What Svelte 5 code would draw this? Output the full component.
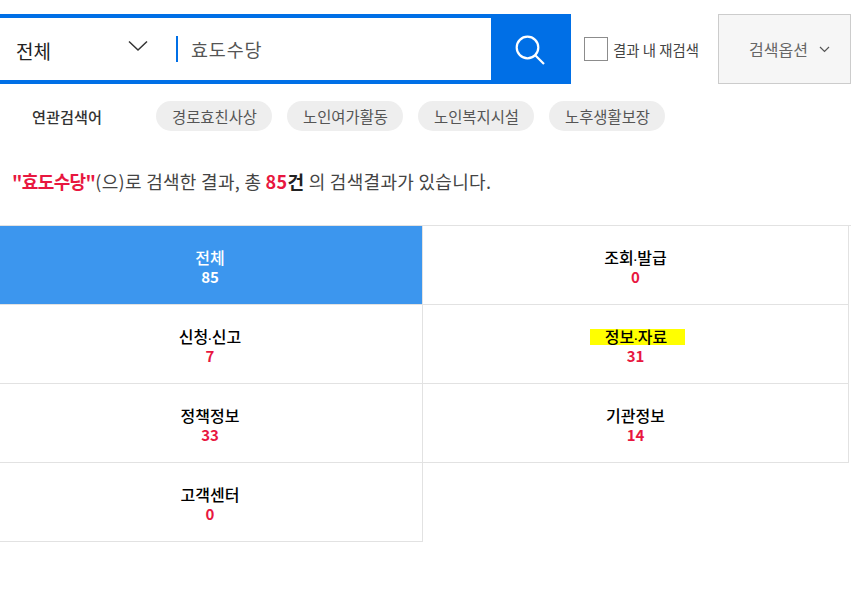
<script>
  const chips = ['경로효친사상', '노인여가활동', '노인복지시설', '노후생활보장'];
  const tabs = [
    { label: ['전체'], count: 85, active: true },
    { label: ['조회', '발급'], count: 0 },
    { label: ['신청', '신고'], count: 7 },
    { label: ['정보', '자료'], count: 31, mark: true },
    { label: ['정책정보'], count: 33 },
    { label: ['기관정보'], count: 14 },
    { label: ['고객센터'], count: 0 }
  ];
</script>

<div class="page">
  <div class="top">
    <div class="search">
      <div class="scope">
        <span>전체</span>
        <svg class="chev" width="20" height="12" viewBox="0 0 20 12"><path d="M1 1.5 L10 10 L19 1.5" fill="none" stroke="#333" stroke-width="1.5"/></svg>
      </div>
      <div class="query"><span>효도수당</span></div>
      <div class="btn">
        <svg width="30" height="30" viewBox="0 0 30 30"><circle cx="12.5" cy="12.5" r="10.8" fill="none" stroke="#fff" stroke-width="2.2"/><path d="M20.2 20.2 L29 29" stroke="#fff" stroke-width="2.2" fill="none"/></svg>
      </div>
    </div>
    <label class="re"><span class="box"></span><span>결과 내 재검색</span></label>
    <div class="opt">
      <span>검색옵션</span>
      <svg width="11" height="7" viewBox="0 0 11 7"><path d="M1 1 L5.5 5.5 L10 1" fill="none" stroke="#555" stroke-width="1.2"/></svg>
    </div>
  </div>

  <div class="related">
    <strong>연관검색어</strong>
    <div class="chips">
      {#each chips as c}<span class="chip">{c}</span>{/each}
    </div>
  </div>

  <p class="summary"><b class="red key">"효도수당"</b>(으)로 검색한 결과, 총 <b class="red">85</b><b>건</b> 의 검색결과가 있습니다.</p>

  <ul class="grid">
    {#each tabs as t}
      <li class:active={t.active}>
        <span class="label" class:mark={t.mark}>{t.label[0]}{#if t.label[1]}<span class="dot">·</span>{t.label[1]}{/if}</span>
        <span class="count">{t.count}</span>
      </li>
    {/each}
  </ul>
</div>

<style>
  :global(body) { margin: 0; background: #fff; }
  .page { font-family: "Noto Sans CJK KR", "Noto Sans", sans-serif; color: #333; width: 860px; height: 595px; overflow: hidden; padding-top: 14px; box-sizing: border-box; }
  .top { display: flex; align-items: flex-start; }
  .search { display: flex; width: 571px; height: 70px; box-sizing: border-box; border: 4px solid #006fe6; border-left: 0; border-right: 0; }
  .scope { width: 176px; display: flex; align-items: center; justify-content: space-between; padding: 0 28px 0 16px; box-sizing: border-box; font-size: 19px; color: #222; }
  .scope span { position: relative; top: 1px; }
  .chev { position: relative; top: -3px; }
  .query { flex: 1; display: flex; align-items: center; }
  .query span { border-left: 2px solid #006fe6; height: 26px; line-height: 26px; padding-left: 13px; font-size: 18.5px; color: #555; letter-spacing: 0.8px; display: block; }
  .btn { width: 80px; margin: -4px 0; padding: 2px 2px 0 0; box-sizing: border-box; background: #006fe6; display: flex; align-items: center; justify-content: center; }
  .re { display: flex; align-items: center; margin: 23px 0 0 13px; font-size: 14.4px; color: #444; width: 134px; height: 24px; white-space: nowrap; }
  .box { width: 22px; height: 22px; border: 1px solid #8c8c8c; margin-right: 5px; flex: none; }
  .opt { width: 133px; height: 70px; padding-left: 10px; box-sizing: border-box; border: 1px solid #ccc; background: #f6f6f6; display: flex; align-items: center; justify-content: center; gap: 11px; font-size: 16px; color: #666; }
  .related { display: flex; align-items: center; height: 30px; margin-top: 17px; }
  .related strong { width: 156px; padding-left: 32px; box-sizing: border-box; font-size: 15.2px; font-weight: 500; color: #333; }
  .chips { display: flex; gap: 15px; }
  .chip { width: 116px; height: 30px; line-height: 30px; border-radius: 15px; background: #eee; text-align: center; text-indent: 1px; font-size: 15.4px; color: #555; }
  .summary { margin: 33px 0 0; padding-left: 12px; height: 34px; line-height: 34px; font-size: 18px; letter-spacing: 0.3px; color: #444; white-space: nowrap; }
  .summary b { font-weight: 700; color: #222; }
  .summary b.red { color: #e8173f; }
  .summary b.key { letter-spacing: -0.6px; }
  .grid { list-style: none; margin: 27px 0 0 -2px; padding: 0; width: 853px; border-top: 1px solid #e2e2e2; display: grid; grid-template-columns: 425px 426px; grid-auto-rows: 79px; }
  .grid li { box-sizing: border-box; padding-top: 4px; border-right: 1px solid #e2e2e2; border-bottom: 1px solid #e2e2e2; display: flex; flex-direction: column; align-items: center; justify-content: center; font-size: 16px; font-weight: 500; line-height: 20px; color: #000; }
  .grid li.active { background: #3c96ee; color: #fff; }
  .label { height: 20px; }
  .dot { font-family: "Liberation Sans", sans-serif; font-size: 11px; font-weight: 700; line-height: 0; }
  .count { color: #e8173f; font-weight: 700; font-size: 15px; }
  .active .count { color: #fff; }
  .mark { width: 95px; margin-left: 4px; text-align: center; text-indent: -3px; background: linear-gradient(#ff0, #ff0) 0 3px / 100% 16px no-repeat; }
</style>
